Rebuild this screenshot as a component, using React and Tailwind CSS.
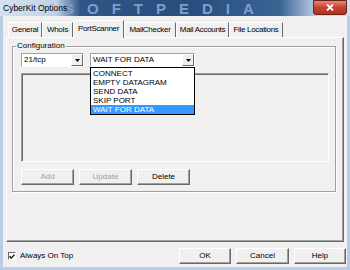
import React from "react";

const font = { fontFamily: '"Liberation Sans", Arial, sans-serif' };

const TABS = [
  { label: "General", w: "w-[34px]" },
  { label: "WhoIs", w: "w-[31px]" },
  { label: "PortScanner", w: "w-[51px]", active: true },
  { label: "MailChecker", w: "w-[52px]" },
  { label: "Mail Accounts", w: "w-[53px]" },
  { label: "File Locations", w: "w-[54px]" },
];

const ACTIONS = ["CONNECT", "EMPTY DATAGRAM", "SEND DATA", "SKIP PORT", "WAIT FOR DATA"];

function Btn({ label, disabled, className = "" }) {
  return (
    <div
      className={`h-[16px] flex items-center justify-center bg-[#f0f0f0] border border-t-white border-l-white border-r-[#696969] border-b-[#696969] shadow-[inset_-1px_-1px_0_#a0a0a0] ${
        disabled ? "text-[#a0a0a0]" : "text-black"
      } ${className}`}
    >
      {label}
    </div>
  );
}

function Arrow() {
  return (
    <div className="w-[12px] h-[12px] flex items-center justify-center bg-[#f0f0f0] border border-t-white border-l-white border-r-[#696969] border-b-[#696969]">
      <svg width="5" height="3" viewBox="0 0 5 3">
        <path d="M0 0h5L2.5 3z" fill="#000" />
      </svg>
    </div>
  );
}

function Combo({ value, className }) {
  return (
    <div
      className={`h-[14px] flex items-center bg-white border border-t-[#a0a0a0] border-l-[#a0a0a0] border-r-white border-b-white ${className}`}
    >
      <div className="flex-1 pl-[2px] leading-none">{value}</div>
      <Arrow />
    </div>
  );
}

export default function App() {
  return (
    <div
      className="w-[350px] h-[270px] flex flex-col bg-[#b9cde4] text-[8px] text-black overflow-hidden"
      style={font}
    >
      {/* title bar */}
      <div className="relative h-[16px] shrink-0 overflow-hidden bg-[linear-gradient(90deg,#d5e1ef_0%,#c0d2e8_16%,#2f5686_23%,#274d7d_55%,#3a6494_80%,#c4d5ea_91%,#d3dfee_100%)]">
        <div className="absolute left-[64px] top-[1px] text-[15px] font-bold tracking-[13px] text-[#7d9fca] leading-[15px] whitespace-nowrap select-none">
          SOFTPEDIA
        </div>
        <div className="absolute left-[3px] top-[4px] text-[8.5px] text-black leading-none">CyberKit Options</div>
        <div className="absolute left-[313px] top-0 w-[34px] h-[15px] rounded-b-[3px] bg-[linear-gradient(#e08a7a,#c7432e_50%,#b3301c)] border border-[#6b2218] flex items-center justify-center">
          <svg width="8" height="7" viewBox="0 0 8 7">
            <path d="M1 0.5l6 6M7 0.5l-6 6" stroke="#fff" strokeWidth="1.8" />
          </svg>
        </div>
      </div>

      {/* client area */}
      <div className="mx-[3px] mb-[3px] flex-1 bg-[#f0f0f0] flex flex-col">
        {/* tabs */}
        <div className="h-[21px] flex items-end pl-[5px] pt-[4px]">
          {TABS.map((t) => (
            <div
              key={t.label}
              className={`${t.w} whitespace-nowrap tracking-[-0.3px] flex items-center justify-center border-t border-l border-t-white border-l-white border-r border-r-[#696969] ${
                t.active
                  ? "h-[18px] bg-[#f0f0f0] relative z-10 -mb-px pb-[1px]"
                  : "h-[15px]"
              }`}
            >
              {t.label}
            </div>
          ))}
        </div>

        {/* tab panel */}
        <div className="mx-[3px] h-[205px] border border-t-white border-l-white border-r-[#696969] border-b-[#696969] shadow-[inset_-1px_-1px_0_#a0a0a0] pt-[8px] pl-[5px] pr-[7px]">
          {/* group box */}
          <div className="relative h-[146px] border border-[#a0a0a0] shadow-[inset_1px_1px_0_white,1px_1px_0_white] pl-[8px] pr-[6px] pt-[6px]">
            <div className="absolute left-[3px] top-[-5px] px-[1px] bg-[#f0f0f0] leading-none">Configuration</div>

            <div className="relative flex gap-[6px]">
              <Combo value="21/tcp" className="w-[63px]" />
              <Combo value="WAIT FOR DATA" className="w-[105px]" />
              {/* opened drop list */}
              <div className="absolute left-[69px] top-[14px] w-[105px] bg-white border border-black z-20 py-[0.5px]">
                {ACTIONS.map((a) => (
                  <div
                    key={a}
                    className={`h-[9px] pl-[2px] leading-[9px] ${
                      a === "WAIT FOR DATA" ? "bg-[#3399ff] text-white" : ""
                    }`}
                  >
                    {a}
                  </div>
                ))}
              </div>
            </div>

            {/* list area */}
            <div className="mt-[6px] h-[89px] border border-t-[#a0a0a0] border-l-[#a0a0a0] border-r-white border-b-white shadow-[inset_1px_1px_0_#696969] bg-[#f0f0f0]" />

            {/* buttons */}
            <div className="mt-[7px] flex gap-[5px]">
              <Btn label="Add" disabled className="w-[53px]" />
              <Btn label="Update" disabled className="w-[53px]" />
              <Btn label="Delete" className="w-[53px]" />
            </div>
          </div>
        </div>

        {/* bottom row */}
        <div className="flex items-center mt-[6px] pl-[5px] pr-[1px]">
          <div className="w-[8px] h-[8px] bg-white border border-t-[#696969] border-l-[#696969] border-r-white border-b-white flex items-center justify-center">
            <svg width="6" height="5" viewBox="0 0 6 5">
              <path d="M0.5 2.3l1.7 1.8L5.6 0.6" stroke="#000" strokeWidth="1.3" fill="none" />
            </svg>
          </div>
          <div className="ml-[4px] flex-1">Always On Top</div>
          <div className="flex gap-[5px]">
            <Btn label="OK" className="w-[52px] h-[15px]" />
            <Btn label="Cancel" className="w-[53px] h-[15px]" />
            <Btn label="Help" className="w-[52px] h-[15px]" />
          </div>
        </div>
      </div>
    </div>
  );
}
